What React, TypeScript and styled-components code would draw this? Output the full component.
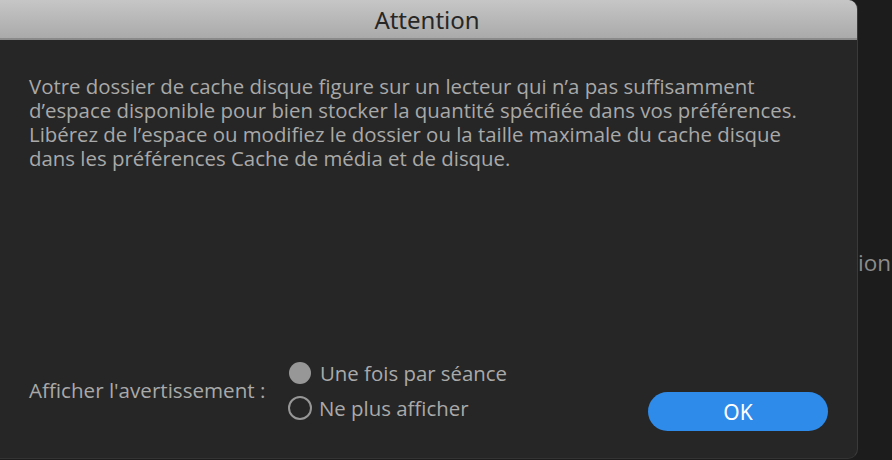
import React from "react";
import styled, { createGlobalStyle } from "styled-components";

const Global = createGlobalStyle`
  html, body { margin: 0; padding: 0; background: #1c1c1c; }
  body { width: 892px; height: 460px; overflow: hidden; }
`;

const Screen = styled.div`
  display: flex;
  width: 892px;
  height: 460px;
  background: #1c1c1c;
`;

const Dialog = styled.div`
  width: 857px;
  height: 458px;
  flex: none;
  display: flex;
  flex-direction: column;
  background: #262626;
  border-right: 1px solid #3a3a3a;
  border-bottom: 1px solid #333;
  border-radius: 0 9px 10px 0;
  overflow: hidden;
`;

const TitleBar = styled.div`
  height: 38px;
  flex: none;
  display: flex;
  align-items: center;
  justify-content: center;
  background: linear-gradient(#c6c6c6, #aaaaaa);
  border-bottom: 2px solid #8a8a8a;
  font-family: "Noto Sans", sans-serif;
  font-size: 24px;
  color: #272727;
  padding-right: 3px;
`;

const Body = styled.div`
  flex: 1;
  display: flex;
  flex-direction: column;
  padding: 34px 29px 27px 29px;
  font-family: "Open Sans", sans-serif;
  color: #a9a9a9;
`;

const Message = styled.div`
  flex: 1;
  display: flex;
  flex-direction: column;
`;

const Line = styled.div`
  font-size: 20.4px;
  height: 24px;
  line-height: 24px;
  white-space: nowrap;
`;

const Footer = styled.div`
  display: flex;
  align-items: center;
`;

const Label = styled.div`
  font-size: 20.6px;
  width: 259px;
  margin-top: -12px;
  white-space: nowrap;
`;

const Options = styled.div`
  display: flex;
  flex-direction: column;
  gap: 11px;
  flex: 1;
  margin-top: -12px;
`;

const Option = styled.label`
  display: flex;
  align-items: center;
  gap: 7px;
  font-size: 20.4px;
  color: #aaaaaa;
  line-height: 24px;
  white-space: nowrap;
`;

const Radio = styled.span<{ $checked?: boolean }>`
  width: ${(p) => (p.$checked ? "22px" : "20px")};
  height: ${(p) => (p.$checked ? "22px" : "20px")};
  flex: none;
  border-radius: 50%;
  box-sizing: content-box;
  background: ${(p) => (p.$checked ? "#979797" : "transparent")};
  border: ${(p) => (p.$checked ? "0" : "2.5px solid #979797")};
  margin-left: ${(p) => (p.$checked ? "1px" : "0")};
  margin-right: ${(p) => (p.$checked ? "2px" : "0")};
`;

const OkButton = styled.button`
  width: 180px;
  height: 39px;
  margin-top: 31px;
  border: none;
  border-radius: 20px;
  background: #2e8bea;
  color: #ffffff;
  font-family: "Noto Sans", sans-serif;
  font-size: 21px;
  padding: 0;
  flex: none;
`;

const Behind = styled.div`
  flex: 1;
  overflow: hidden;
  display: flex;
  flex-direction: column;
`;

const BehindTop = styled.div`
  height: 248px;
  flex: none;
`;

const BehindText = styled.div`
  white-space: nowrap;
  font-family: "Open Sans", sans-serif;
  font-size: 22.5px;
  line-height: 30px;
  color: #8c8c8c;
`;

const lines = [
  "Votre dossier de cache disque figure sur un lecteur qui n’a pas suffisamment",
  "d’espace disponible pour bien stocker la quantité spécifiée dans vos préférences.",
  "Libérez de l’espace ou modifiez le dossier ou la taille maximale du cache disque",
  "dans les préférences Cache de média et de disque.",
];

export default function App() {
  return (
    <>
      <Global />
      <Screen>
        <Dialog>
          <TitleBar>Attention</TitleBar>
          <Body>
            <Message>
              {lines.map((l) => (
                <Line key={l}>{l}</Line>
              ))}
            </Message>
            <Footer>
              <Label>Afficher l'avertissement :</Label>
              <Options>
                <Option>
                  <Radio $checked />
                  Une fois par séance
                </Option>
                <Option>
                  <Radio />
                  Ne plus afficher
                </Option>
              </Options>
              <OkButton>OK</OkButton>
            </Footer>
          </Body>
        </Dialog>
        <Behind>
          <BehindTop />
          <BehindText>ion</BehindText>
        </Behind>
      </Screen>
    </>
  );
}
